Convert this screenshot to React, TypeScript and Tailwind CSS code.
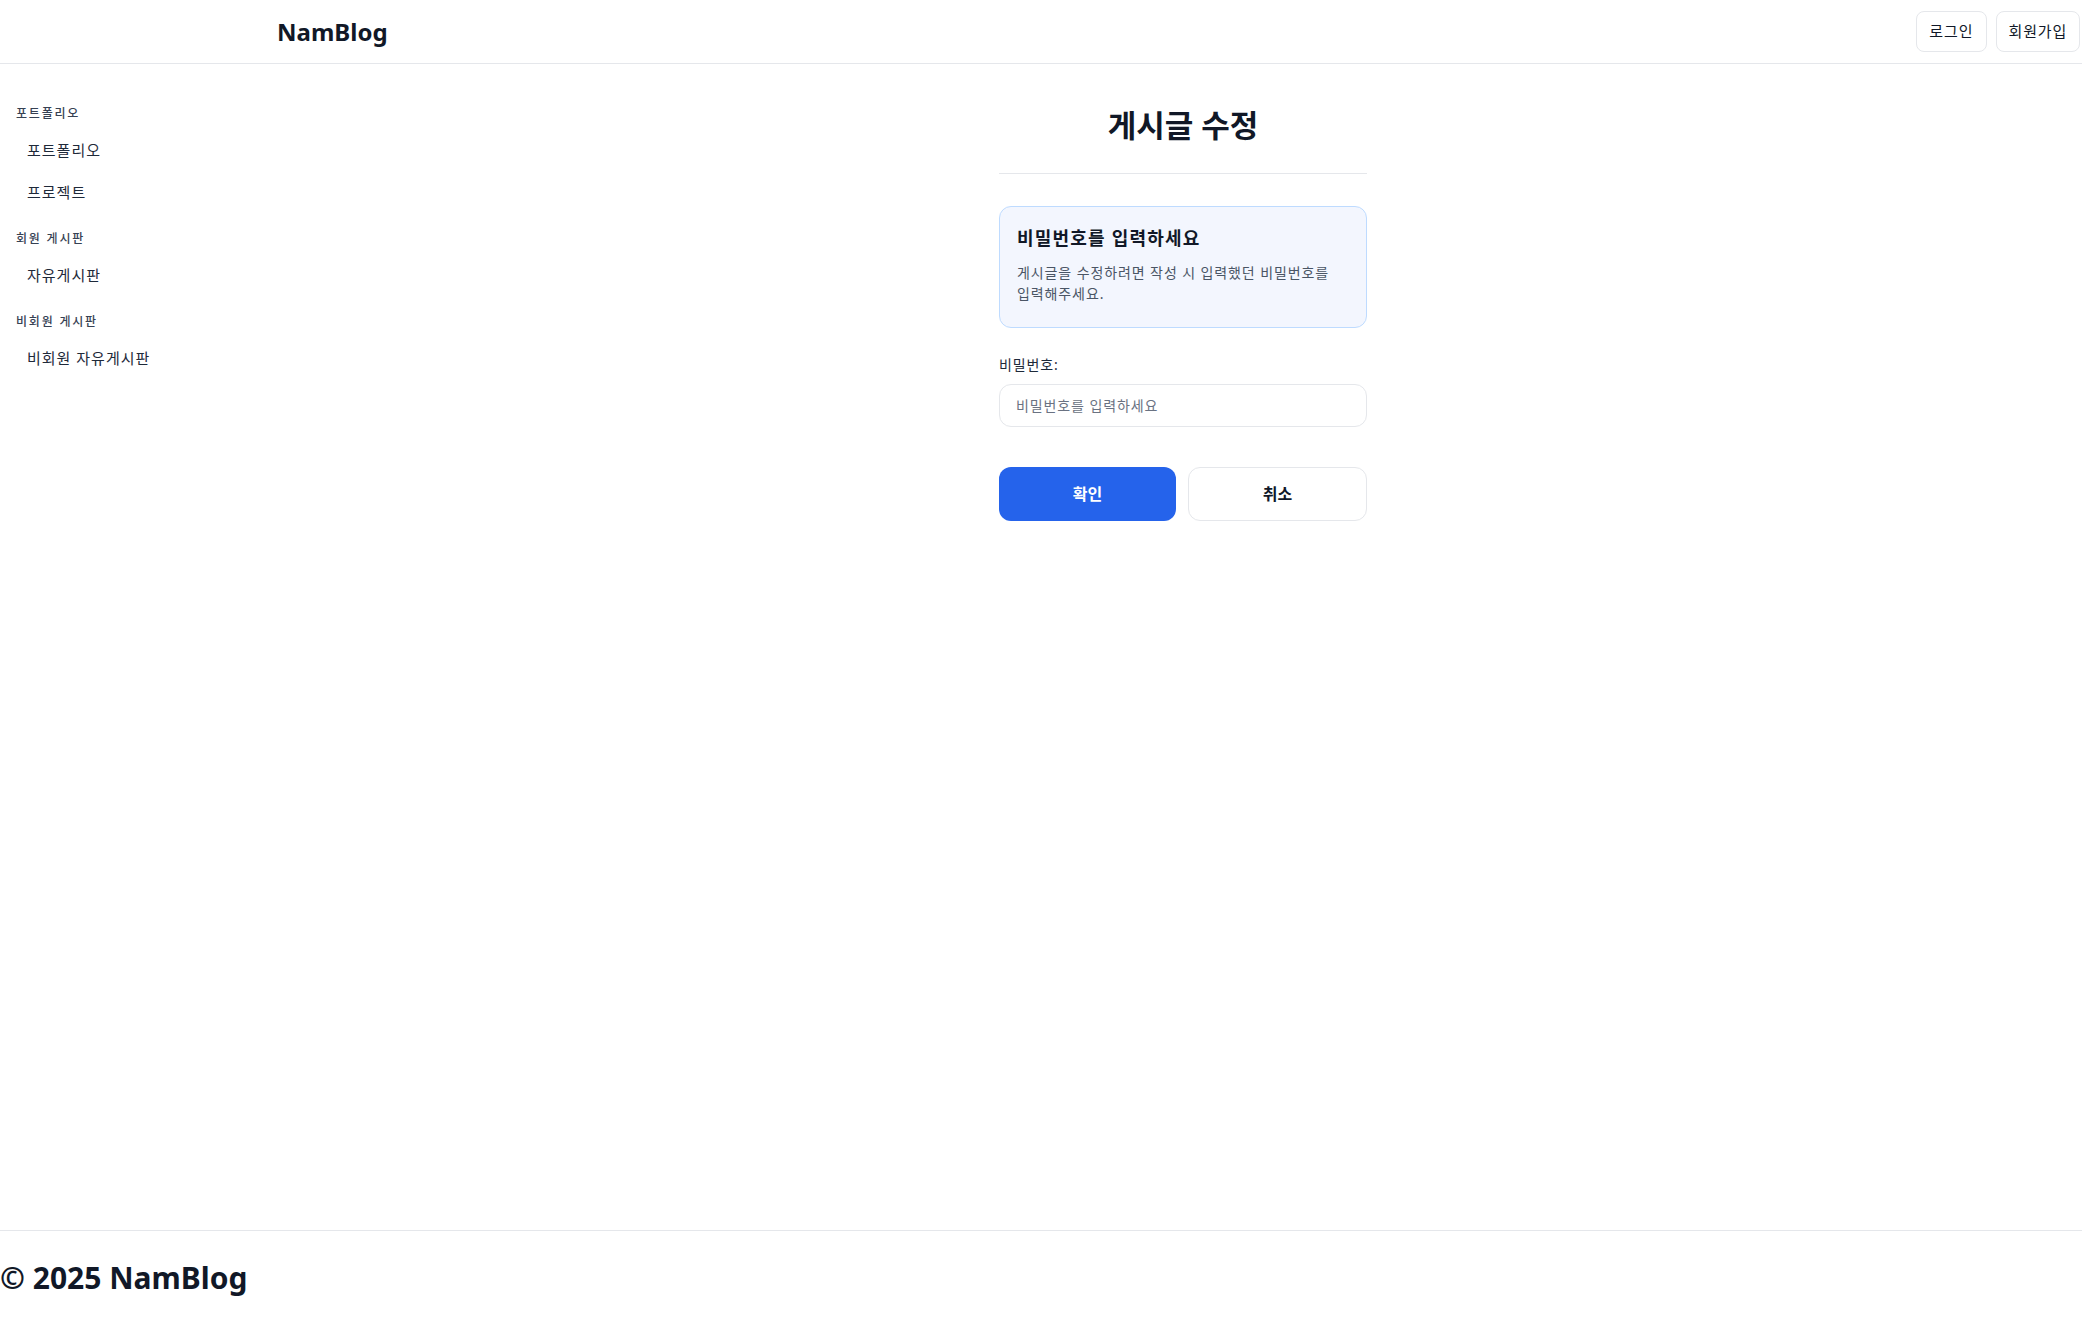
import React from "react";

const font = { fontFamily: '"Noto Sans", "Noto Sans CJK KR", sans-serif' };

function SideHeading({ children }: { children: React.ReactNode }) {
  return <div className="px-4 text-[12px] leading-[18px] text-gray-700 font-medium tracking-[1.8px]">{children}</div>;
}
function SideItem({ children }: { children: React.ReactNode }) {
  return <div className="px-[27px] text-[15px] leading-[22px] text-gray-800 tracking-[1px]">{children}</div>;
}

export default function App() {
  return (
    <div className="min-h-screen flex flex-col bg-white text-gray-900" style={font}>
      <header className="h-[64px] border-b border-gray-200 flex items-center justify-between pl-[277px] pr-[2px]">
        <div className="text-[24px] font-bold text-[#111827]">NamBlog</div>
        <div className="flex items-center gap-[9px]">
          <button className="h-[41px] px-[12px] rounded-lg border border-gray-200 text-[15px] text-gray-900 bg-white tracking-[1px]">로그인</button>
          <button className="h-[41px] px-[12px] rounded-lg border border-gray-200 text-[15px] text-gray-900 bg-white tracking-[0.8px]">회원가입</button>
        </div>
      </header>
      <div className="flex flex-1">
        <aside className="w-[284px] shrink-0 pt-[41px]">
          <SideHeading>포트폴리오</SideHeading>
          <div className="mt-[16px] flex flex-col gap-[20px]">
            <SideItem>포트폴리오</SideItem>
            <SideItem>프로젝트</SideItem>
          </div>
          <div className="mt-[27px]"><SideHeading>회원 게시판</SideHeading></div>
          <div className="mt-[16px]"><SideItem>자유게시판</SideItem></div>
          <div className="mt-[27px]"><SideHeading>비회원 게시판</SideHeading></div>
          <div className="mt-[16px]"><SideItem>비회원 자유게시판</SideItem></div>
        </aside>
        <main className="flex-1 flex justify-center">
          <div className="w-[368px] pt-[41px]">
            <h1 className="text-center text-[31px] leading-[40px] font-bold text-[#111827]">게시글 수정</h1>
            <div className="mt-[28px] border-t border-gray-200" />
            <div className="mt-[32px] rounded-xl border border-blue-200 bg-[#f3f6fe] px-[17px] pt-[18px] pb-[23px]">
              <div className="text-[18px] leading-[26px] font-semibold text-[#111827] tracking-[1.2px]">비밀번호를 입력하세요</div>
              <p className="mt-[11px] text-[14px] leading-[21px] text-gray-600 tracking-[0.9px] break-keep">게시글을 수정하려면 작성 시 입력했던 비밀번호를 입력해주세요.</p>
            </div>
            <label className="block mt-[27px] text-[14px] leading-[20px] text-gray-800 tracking-[0.9px]">비밀번호:</label>
            <input
              type="password"
              placeholder="비밀번호를 입력하세요"
              className="mt-[9px] w-full h-[43px] rounded-xl border border-gray-200 px-[16px] text-[14px] tracking-[0.9px] placeholder:text-gray-500 outline-none"
            />
            <div className="mt-[40px] flex gap-[12px]">
              <button className="w-[177px] h-[54px] rounded-xl bg-[#2563eb] text-white text-[16px] font-semibold">확인</button>
              <button className="flex-1 h-[54px] rounded-xl border border-gray-200 bg-white text-[16px] font-semibold text-gray-900">취소</button>
            </div>
          </div>
        </main>
      </div>
      <footer className="h-[89px] border-t border-gray-200 flex items-center">
        <div className="text-[30px] font-bold text-[#111827] pt-[4px]">© 2025 NamBlog</div>
      </footer>
    </div>
  );
}
